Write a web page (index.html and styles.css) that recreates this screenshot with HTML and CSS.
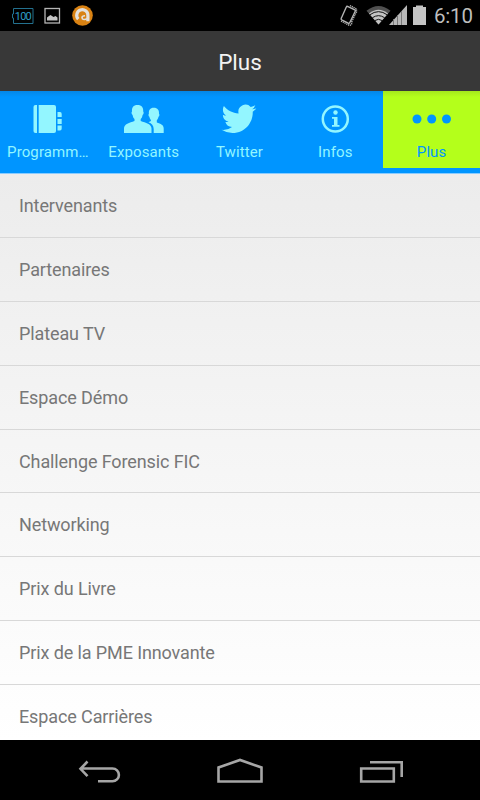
FILE: index.html
```html
<!DOCTYPE html>
<html lang="fr">
<head>
    <meta charset="utf-8">
    <title>Plus</title>
    <link rel="stylesheet" href="styles.css">
</head>
<body>
    <div class="status-bar">
        <svg class="status-left" width="100" height="31" viewBox="0 0 100 31">
            <path d="M13.500 8.500h19.500v15H13.500v-5.500h-1v-4h1z" fill="none" stroke="#23718f"/>
            <text class="battery-text" x="14.800" y="20" textLength="17">100</text>
            <rect x="45" y="8.500" width="14.500" height="14.500" fill="none" stroke="#b5b5b5" stroke-width="1.300"/>
            <path d="M47 20.500v-3l2-1.500 1.500-1 1.500 1 1.500 1 2-1 2 1.500v3z" fill="#c4c4c4"/>
            <circle cx="82.500" cy="15.500" r="10.300" fill="#d98213"/>
            <path d="M78.300 19.200a5.600 5.600 0 1 1 9.600-3.500v5.500" fill="none" stroke="#e3e0dc" stroke-width="3.200"/>
            <path d="M87 18.500c-1.500 1.500-5 1.500-5-.7 0-1.300 1.500-2 3-2" fill="none" stroke="#e3e0dc" stroke-width="1.600"/>
        </svg>
        <svg class="status-right" width="92" height="31" viewBox="338 0 92 31">
            <g fill="none" stroke="#b4b4b4">
                <path d="M347.500 6.300l7.300 3.500q1 .6.400 1.600l-5.500 11.300q-.5 1-1.500.5l-6.500-3.400q-1-.6-.4-1.600l5-11.200q.4-1 1.200-.7z" stroke-width="1.400"/>
                <path d="M350 5.500l6.500 3.500v3l-5 10M341 21l8.500 4.500 2-1 .5-4" stroke-width="1.400" stroke-dasharray="1.200 .8"/>
            </g>
            <path d="M366.500 10.800Q378.500 1 390.500 10.800L378.500 24.500z" fill="#505050"/>
            <path d="M369 13.500Q378.500 6 388 13.500L378.500 24.500z" fill="#c4c4c4"/>
            <path d="M369.800 14.800Q378.500 8.500 387.200 14.800M372.300 17.800Q378.500 13.500 384.700 17.800M374.800 20.600Q378.500 18 382.200 20.600" fill="none" stroke="#111" stroke-width="1"/>
            <path d="M407 5v20h-18z" fill="#b8b8b8"/>
            <path d="M393.500 19v6M397.500 15v10M401.500 11v14" stroke="#777"/>
            <path d="M416 5.500h7V7h3v18h-13V7h3z" fill="#c4c4c4"/>
        </svg>
        <span class="clock">6:10</span>
    </div>

    <div class="title-bar">Plus</div>

    <div class="tabs">
        <div class="tab">
            <svg class="icon" width="96" height="32" viewBox="0 103 96 32">
                <path d="M37 105v28h-1.500a2 2 0 0 1-2-2v-24a2 2 0 0 1 2-2z"/>
                <path d="M38.700 105H54a2 2 0 0 1 2 2v24a2 2 0 0 1-2 2H38.700z"/>
                <path d="M57.500 112h2.500q1.700 0 1.700 2v3h-4.200zM57.500 119h4.200v5h-4.200zM57.500 125.500h4.200v3q0 2-1.700 2h-2.500z"/>
            </svg>
            <span>Programm…</span>
        </div>
        <div class="tab">
            <svg class="icon" width="96" height="32" viewBox="95.500 103 96 32">
                <path d="M137 105c4.200 0 6 2.600 5.700 6.500.9.800.4 3-.6 3.400-.3 2-.9 3-1.900 4v2.100c5 2 10.800 2.800 10.800 7.500v4.500h-27.500v-4.500c0-4.700 5.500-5.500 10.500-7.500v-2.100c-1-1-1.600-2-1.900-4-1-.4-1.500-2.600-.6-3.400-.3-3.900 1.300-6.500 5.500-6.500z"/>
                <path d="M153.300 107.800c3.800 0 5.500 2.500 5.200 6 .8.700.4 2.600-.5 3-.3 1.500-.8 2.500-1.700 3.400v2.200c4 1.500 6.900 2.200 6.900 6.100v4.500h-10v-4c0-3.500-2-5.500-5.200-6.800l2.400-1.300v-1c-.8-.7-1.300-1.600-1.500-3.100-.9-.4-1.300-2.300-.5-3-.3-3.500 1.100-6 4.900-6z"/>
            </svg>
            <span>Exposants</span>
        </div>
        <div class="tab">
            <svg class="icon" width="96" height="32" viewBox="192 103 96 32">
                <path transform="translate(221.500 101.500) scale(1.450)" d="M23.950 4.570a10 10 0 0 1-2.820.77 4.960 4.960 0 0 0 2.160-2.720c-.95.550-2 .950-3.130 1.180a4.920 4.920 0 0 0-8.380 4.480C7.690 8.090 4.070 6.130 1.640 3.160a4.820 4.820 0 0 0-.67 2.480c0 1.710.87 3.210 2.190 4.100a4.900 4.900 0 0 1-2.230-.62v.06a4.920 4.920 0 0 0 3.950 4.830 5 5 0 0 1-2.210.08 4.940 4.940 0 0 0 4.600 3.420A9.870 9.870 0 0 1 0 19.540a13.990 13.990 0 0 0 7.560 2.210c9.050 0 14-7.500 14-13.980 0-.21 0-.42-.02-.63a9.940 9.940 0 0 0 2.460-2.550z"/>
            </svg>
            <span>Twitter</span>
        </div>
        <div class="tab">
            <svg class="icon" width="96" height="32" viewBox="287 103 96 32">
                <circle cx="335.300" cy="119" r="12.500" fill="none" stroke="#93f6ff" stroke-width="2.500"/>
                <circle cx="335.500" cy="112.500" r="2.200"/>
                <path d="M332 117h5.500v8h2v1.800h-7.500V125h2v-6.200h-2z"/>
            </svg>
            <span>Infos</span>
        </div>
        <div class="tab active">
            <svg class="icon" width="96" height="32" viewBox="383 103 96 32">
                <circle cx="416" cy="119" r="4.500"/>
                <circle cx="430.700" cy="119" r="4.500"/>
                <circle cx="445.500" cy="119" r="4.500"/>
            </svg>
            <span>Plus</span>
        </div>
    </div>

    <div class="list">
        <div class="row">Intervenants</div>
        <div class="row">Partenaires</div>
        <div class="row">Plateau TV</div>
        <div class="row">Espace Démo</div>
        <div class="row">Challenge Forensic FIC</div>
        <div class="row">Networking</div>
        <div class="row">Prix du Livre</div>
        <div class="row">Prix de la PME Innovante</div>
        <div class="row">Espace Carrières</div>
    </div>

    <div class="nav-bar">
        <svg width="480" height="60" viewBox="0 740 480 60">
            <path d="M87.500 761.500l-7 7.300 7 7.300M81 768.500h31.500a6.400 6.400 0 0 1 0 12.800H98"/>
            <path d="M218.500 781.500V767.500l21.500-7.500 21.500 7.500v14z"/>
            <path d="M361.200 768.500h32.600v13h-32.600zM370 762.300h31.700V777"/>
        </svg>
    </div>
</body>
</html>
```

FILE: styles.css
```css
body {
    margin: 0;
    height: 800px;
    display: flex;
    flex-direction: column;
    overflow: hidden;
    background: #000;
    font-family: Roboto, "Liberation Sans", sans-serif;
}
svg {
    display: block;
}
.status-bar {
    height: 31px;
    flex: none;
    display: flex;
    align-items: center;
    background: #000;
}
.status-right {
    margin-left: auto;
}
.battery-text {
    font-size: 11px;
    fill: #2e9cc6;
}
.clock {
    width: 46px;
    padding-left: 4px;
    font-size: 20.5px;
    letter-spacing: -0.2px;
    line-height: 32px;
    color: #bebebe;
}
.title-bar {
    height: 60px;
    flex: none;
    line-height: 62px;
    text-align: center;
    font-size: 22.5px;
    color: #f3f3f3;
    background: #383838;
}
.tabs {
    height: 77px;
    flex: none;
    display: grid;
    grid-template-columns: 95.8px 95.8px 95.8px 95.8px 96.8px;
    padding-bottom: 5px;
    border-bottom: 1px solid #8accff;
    background: linear-gradient(#0587e6, #0095ff 6px);
}
.tab {
    display: flex;
    flex-direction: column;
    align-items: center;
    padding-top: 12px;
    font-size: 15px;
    letter-spacing: 0.1px;
    line-height: 18px;
    color: #93f6ff;
}
.tab span {
    margin-top: 8px;
}
.icon {
    flex: none;
    fill: #93f6ff;
}
.active {
    background: linear-gradient(#a4e81d, #b4ff1b 6px);
    color: #0095ff;
}
.active .icon {
    fill: #0095ff;
}
.list {
    flex: 1;
    min-height: 0;
    overflow: hidden;
    background: linear-gradient(#ececec, #fff);
}
.row {
    height: 63.8px;
    box-sizing: border-box;
    padding-left: 19px;
    border-bottom: 1px solid #d8d8d8;
    font-size: 18px;
    letter-spacing: -0.11px;
    line-height: 64px;
    color: #777;
}
.row:first-child {
    height: 64.3px;
}
.nav-bar {
    height: 60px;
    flex: none;
    background: #000;
}
.nav-bar path {
    fill: none;
    stroke: #a6a6a6;
    stroke-width: 2.6;
}
```
